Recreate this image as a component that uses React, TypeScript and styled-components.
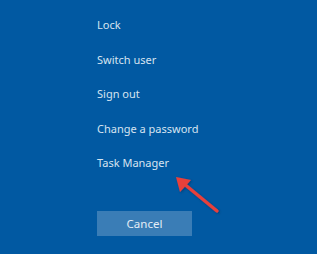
import React from "react";
import styled, { createGlobalStyle } from "styled-components";

const GlobalStyle = createGlobalStyle`
  html, body {
    margin: 0;
    padding: 0;
    background: #0159a2;
  }
`;

const Screen = styled.div`
  position: relative;
  width: 317px;
  height: 254px;
  overflow: hidden;
  background: #0159a2;
  font-family: "Noto Sans", "Open Sans", sans-serif;
  color: #d6e4f1;
`;

const Menu = styled.ul`
  list-style: none;
  margin: 0;
  padding: 16px 0 0 97px;
  display: flex;
  flex-direction: column;
  gap: 17.5px;
`;

const Item = styled.li`
  font-size: 11px;
  line-height: 17px;
  height: 17px;
  white-space: nowrap;
`;

const Footer = styled.div`
  padding: 40px 0 0 97px;
`;

const Button = styled.button`
  width: 95px;
  height: 25px;
  border: none;
  padding: 0;
  background: #3a7db6;
  color: #e4eef7;
  font-family: inherit;
  font-size: 11.5px;
`;

const Arrow = styled.svg`
  position: absolute;
  left: 170px;
  top: 170px;
  width: 56px;
  height: 50px;
  overflow: visible;
`;

const items = ["Lock", "Switch user", "Sign out", "Change a password", "Task Manager"];

export default function App() {
  return (
    <Screen>
      <GlobalStyle />
      <Menu>
        {items.map((t) => (
          <Item key={t}>{t}</Item>
        ))}
      </Menu>
      <Footer>
        <Button>Cancel</Button>
      </Footer>
      <Arrow viewBox="0 0 56 50">
        <defs>
          <filter id="sh" x="-20%" y="-20%" width="140%" height="140%">
            <feDropShadow dx="1" dy="1" stdDeviation="0.8" floodColor="#002a55" floodOpacity="0.6" />
          </filter>
        </defs>
        <g filter="url(#sh)">
          <line x1="13" y1="13" x2="47" y2="41" stroke="#e8403a" strokeWidth="3.2" strokeLinecap="round" />
          <polygon points="6,7 21,10 10,22" fill="#e8403a" />
        </g>
      </Arrow>
    </Screen>
  );
}
